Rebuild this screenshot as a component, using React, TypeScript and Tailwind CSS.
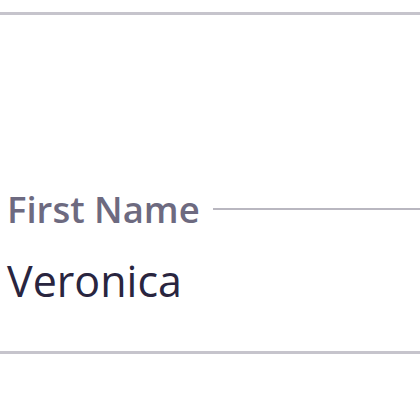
export default function App() {
  return (
    <div className="w-[420px] h-[420px] bg-white overflow-hidden" style={{ fontFamily: '"Open Sans", sans-serif' }}>
      <div className="mt-[12px] h-[3px] bg-[#c6c4cc]" />
      <div className="pl-[7px] pt-[170px]">
        <div className="flex items-center gap-[13px]">
          <span className="text-[36.5px] leading-[48px] font-semibold text-[#6d6a80] whitespace-nowrap">First Name</span>
          <div className="flex-1 h-[2px] bg-[#b9b7c0]" />
        </div>
        <div className="mt-[19px] text-[43px] leading-[58px] text-[#29253f]">Veronica</div>
      </div>
      <div className="mt-[41px] h-[3px] bg-[#c6c4cc]" />
    </div>
  );
}
